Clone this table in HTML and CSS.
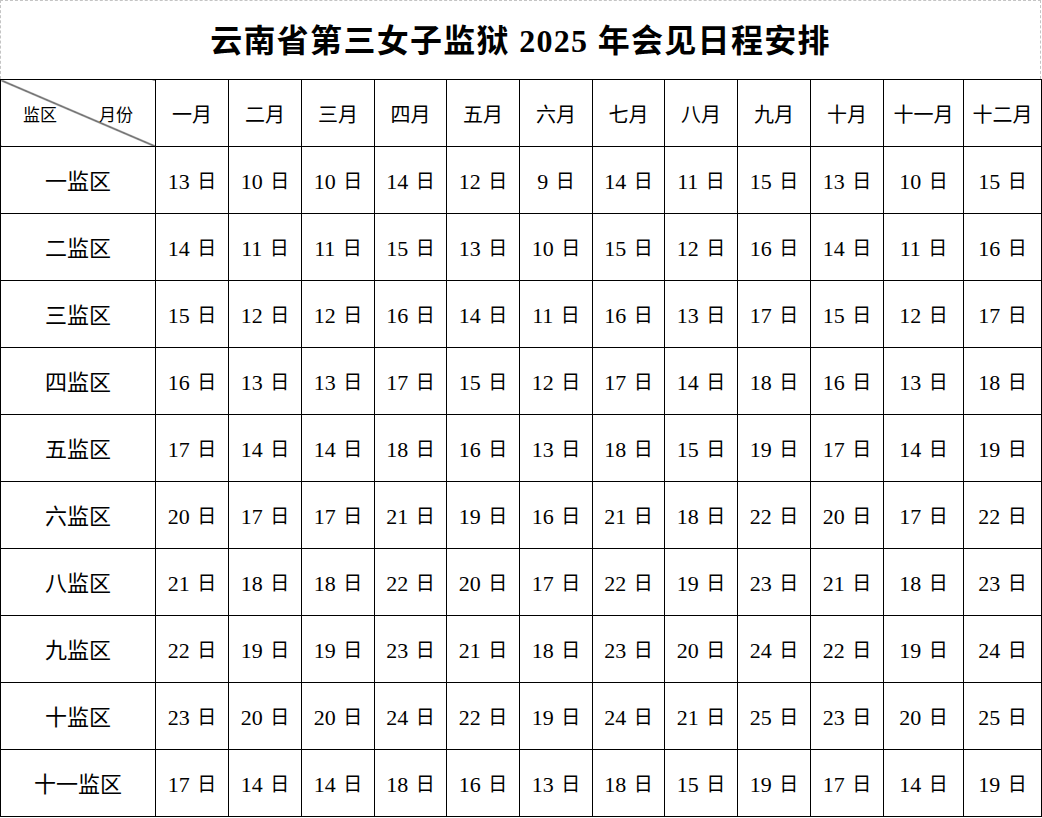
FILE: index.html
```html
<!DOCTYPE html>
<html lang="zh-CN">
<head>
<meta charset="utf-8">
<title>云南省第三女子监狱 2025 年会见日程安排</title>
<link rel="stylesheet" href="styles.css">
</head>
<body>
<div class="sheet">
  <div class="title-bar">
    <h1 class="title">云南省第三女子监狱 2025 年会见日程安排</h1>
  </div>
  <table class="schedule">
    <colgroup>
      <col class="c-label">
      <col class="c73"><col class="c73"><col class="c73"><col class="c72"><col class="c73"><col class="c73"><col class="c72"><col class="c73"><col class="c73"><col class="c73">
      <col class="c80"><col class="c78">
    </colgroup>
    <thead>
      <tr>
        <th class="corner"><div class="corner-inner"><span>监区</span><span>月份</span></div></th>
        <th>一月</th><th>二月</th><th>三月</th><th>四月</th><th>五月</th><th>六月</th>
        <th>七月</th><th>八月</th><th>九月</th><th>十月</th><th>十一月</th><th>十二月</th>
      </tr>
    </thead>
    <tbody id="rows"></tbody>
  </table>
</div>
<script>
  var data = [
    ["一监区", [13,10,10,14,12,9,14,11,15,13,10,15]],
    ["二监区", [14,11,11,15,13,10,15,12,16,14,11,16]],
    ["三监区", [15,12,12,16,14,11,16,13,17,15,12,17]],
    ["四监区", [16,13,13,17,15,12,17,14,18,16,13,18]],
    ["五监区", [17,14,14,18,16,13,18,15,19,17,14,19]],
    ["六监区", [20,17,17,21,19,16,21,18,22,20,17,22]],
    ["八监区", [21,18,18,22,20,17,22,19,23,21,18,23]],
    ["九监区", [22,19,19,23,21,18,23,20,24,22,19,24]],
    ["十监区", [23,20,20,24,22,19,24,21,25,23,20,25]],
    ["十一监区", [17,14,14,18,16,13,18,15,19,17,14,19]]
  ];
  var tb = document.getElementById("rows");
  data.forEach(function (r) {
    var tr = document.createElement("tr");
    var th = document.createElement("th");
    th.className = "row-label";
    th.textContent = r[0];
    tr.appendChild(th);
    r[1].forEach(function (d) {
      var td = document.createElement("td");
      td.appendChild(document.createTextNode(d + " "));
      var u = document.createElement("span");
      u.className = "unit";
      u.textContent = "日";
      td.appendChild(u);
      tr.appendChild(td);
    });
    tb.appendChild(tr);
  });
</script>
</body>
</html>
```

FILE: styles.css
```css
html, body {
  margin: 0;
  padding: 0;
  background: #fff;
}

body {
  font-family: "Liberation Serif", "Noto Sans CJK SC", serif;
  color: #000;
}

.sheet {
  width: 1041px;
}

.title-bar {
  box-sizing: border-box;
  height: 79px;
  border: 1px dashed #c4c4c4;
  border-bottom: none;
  display: flex;
  align-items: center;
  justify-content: center;
}

.title {
  margin: 0;
  font-size: 32px;
  font-weight: 700;
  line-height: 1;
  letter-spacing: 1.3px;
  padding-top: 2px;
}

.schedule {
  border-collapse: collapse;
  table-layout: fixed;
  width: 1041px;
}

.c-label { width: 155px; }
.c73 { width: 73px; }
.c72 { width: 72px; }
.c80 { width: 80px; }
.c78 { width: 78px; }

.schedule th,
.schedule td {
  border: 1px solid #000;
  padding: 0;
  text-align: center;
  vertical-align: middle;
  height: 66px;
  white-space: nowrap;
}

.schedule thead th {
  font-size: 20px;
  font-weight: 400;
}

.schedule td {
  font-size: 22px;
  line-height: 1;
  word-spacing: 2px;
  padding-top: 3px;
  height: 63px;
}

.unit {
  font-size: 19px;
  display: inline-block;
  transform: translateY(-1px);
}

.schedule .row-label {
  font-size: 22px;
  font-weight: 400;
  padding-bottom: 2px;
  height: 64px;
}

.corner {
  background: linear-gradient(to top right, transparent calc(50% - 1px), #000 50%, transparent calc(50% + 1px));
}

.corner-inner {
  display: flex;
  justify-content: space-between;
  padding: 0 22px;
  font-size: 17px;
}
```
